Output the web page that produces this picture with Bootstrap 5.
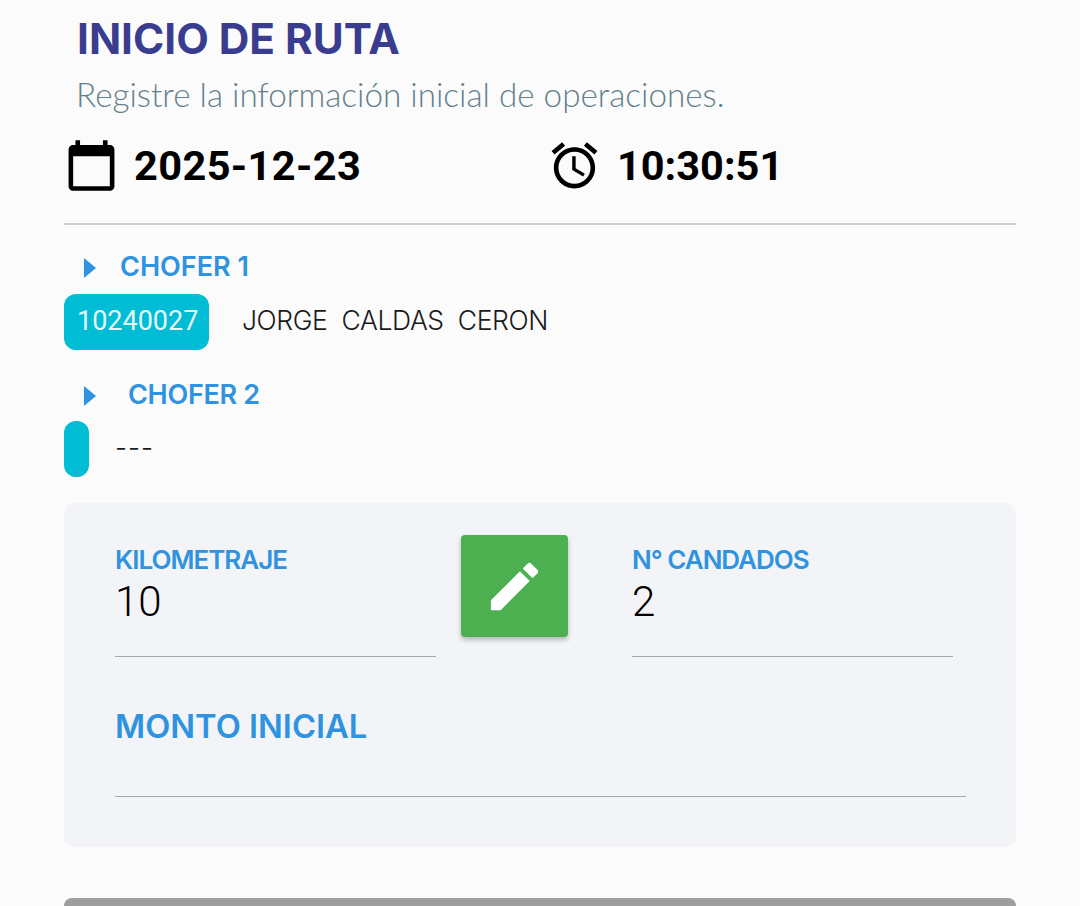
<!DOCTYPE html>
<html lang="es">
<head>
  <meta charset="UTF-8" />
  <meta name="viewport" content="width=device-width, initial-scale=1.0"/>
  <title>Inicio de ruta</title>
  <link href="https://cdn.jsdelivr.net/npm/bootstrap@5.3.3/dist/css/bootstrap.min.css" rel="stylesheet" />
  <style>
    html, body { height: 100%; overflow: hidden; }
    body { background: #fbfbfc; font-family: "Inter", "Liberation Sans", sans-serif; color: #111; }
    .page-wrap { padding: 14px 64px 0; }
    .page-title { margin: 0 0 0 13px; font-family: "Inter", sans-serif; font-weight: 700; font-size: 42.3px; line-height: 50px; color: #3a3d8f; }
    .page-sub { margin: 6px 0 0 12px; font-family: "Lato", sans-serif; font-weight: 300; font-size: 33.25px; line-height: 48px; color: #64808c; }
    .stamp-row { margin-top: 20px; height: 55px; }
    .stamp-cell { width: 483px; }
    .stamp-text { font-family: "Roboto", sans-serif; font-weight: 700; font-size: 41.5px; color: #000; margin-left: 15px; line-height: 55px; }
    .stamp-date { letter-spacing: .4px; }
    .rule { border-top: 2px solid #cfcfcf; margin-top: 30px; }
    .driver-head { color: #2f93e0; font-weight: 600; font-size: 27px; line-height: 36px; margin-top: 24px; }
    .driver-head.is-second { margin-top: 27px; }
    .driver-arrow { margin: 2px 0 0 20px; }
    .driver-title-2 { margin-left: 32px; letter-spacing: -.3px; }
    .driver-row { margin-top: 9px; }
    .driver-row.is-second { margin-top: 8px; }
    .driver-chip { background: #00bcd4; color: #e4f8fb; border-radius: 12px; height: 56px; width: 145px; padding: 0 0 2px 13px; font-family: "Roboto", sans-serif; font-size: 27px; font-weight: 400; }
    .driver-chip.is-empty { padding: 0; width: 25px; }
    .driver-name { font-size: 26.5px; font-weight: 300; letter-spacing: -.4px; color: #1a1a1a; white-space: pre; margin: 0 0 2px 33px; }
    .driver-name.is-blank { margin-left: 26px; letter-spacing: 1px; }
    .data-panel { background: #f3f4f8; border-radius: 12px; margin-top: 26px; height: 344px; padding: 32px 50px 0 51px; }
    .field-col { width: 321px; }
    .field-label { color: #2f93e0; font-weight: 600; font-size: 26px; line-height: 30px; margin-top: 10px; letter-spacing: -1px; }
    .field-value { font-family: "Roboto", sans-serif; font-size: 42px; line-height: 54px; font-weight: 300; color: #000; }
    .field-line { border-top: 1px solid #a6a8ac; margin-top: 27px; }
    .btn-edit { width: 107px; height: 102px; background: #4caf50; border: 0; border-radius: 4px; margin: 0 64px 0 25px; box-shadow: 0 3px 5px rgba(0,0,0,.25); padding: 0; }
    .monto-label { color: #2f93e0; font-weight: 600; font-size: 32.7px; line-height: 40px; margin-top: 49px; }
    .monto-line { border-top: 1px solid #a6a8ac; margin-top: 50px; }
    .btn-submit { display: block; width: 100%; height: 8px; background: #9e9e9e; border: 0; border-radius: 12px 12px 0 0; margin-top: 51px; padding: 0; }
  </style>
</head>
<body>
  <div class="page-wrap">
    <h1 class="page-title">INICIO DE RUTA</h1>
    <p class="page-sub mb-0">Registre la información inicial de operaciones.</p>

    <!-- fecha y hora -->
    <div class="d-flex stamp-row">
      <div class="d-flex align-items-center stamp-cell">
        <svg width="55" height="55" viewBox="0 0 24 24" fill="#000"><path d="M20 3h-1V1h-2v2H7V1H5v2H4c-1.1 0-2 .9-2 2v16c0 1.1.9 2 2 2h16c1.1 0 2-.9 2-2V5c0-1.1-.9-2-2-2zm0 18H4V8h16v13z"/></svg>
        <span class="stamp-text stamp-date">2025-12-23</span>
      </div>
      <div class="d-flex align-items-center">
        <svg width="55" height="55" viewBox="0 0 24 24" fill="#000"><path d="M22 5.72l-4.6-3.86-1.29 1.53 4.6 3.86L22 5.72zM7.88 3.39L6.6 1.86 2 5.71l1.29 1.53 4.59-3.85zM12.5 8H11v6l4.75 2.85.75-1.23-4-2.37V8zM12 4c-4.97 0-9 4.03-9 9s4.03 9 9 9 9-4.03 9-9-4.03-9-9-9zm0 16c-3.87 0-7-3.13-7-7s3.13-7 7-7 7 3.13 7 7-3.13 7-7 7z"/></svg>
        <span class="stamp-text">10:30:51</span>
      </div>
    </div>
    <div class="rule"></div>

    <!-- choferes -->
    <div class="d-flex align-items-center driver-head">
      <svg class="driver-arrow" width="12" height="20" viewBox="0 0 12 20" fill="#2f93e0"><path d="M0 0l12 10L0 20z"/></svg>
      <span class="ms-4">CHOFER 1</span>
    </div>
    <div class="d-flex align-items-center driver-row">
      <span class="d-flex align-items-center driver-chip">10240027</span>
      <span class="driver-name">JORGE  CALDAS  CERON</span>
    </div>
    <div class="d-flex align-items-center driver-head is-second">
      <svg class="driver-arrow" width="12" height="20" viewBox="0 0 12 20" fill="#2f93e0"><path d="M0 0l12 10L0 20z"/></svg>
      <span class="driver-title-2">CHOFER 2</span>
    </div>
    <div class="d-flex align-items-center driver-row is-second">
      <span class="driver-chip is-empty"></span>
      <span class="driver-name is-blank">---</span>
    </div>

    <!-- datos -->
    <div class="data-panel">
      <div class="d-flex">
        <div class="field-col">
          <div class="field-label">KILOMETRAJE</div>
          <div class="field-value">10</div>
          <div class="field-line"></div>
        </div>
        <button type="button" class="btn-edit d-flex align-items-center justify-content-center">
          <svg width="63" height="63" viewBox="0 0 24 24" fill="#fff"><path d="M3 17.25V21h3.75L17.81 9.94l-3.75-3.75L3 17.25zM20.71 7.04c.39-.39.39-1.02 0-1.41l-2.34-2.34c-.39-.39-1.02-.39-1.41 0l-1.83 1.83 3.75 3.75 1.83-1.83z"/></svg>
        </button>
        <div class="field-col">
          <div class="field-label">N° CANDADOS</div>
          <div class="field-value">2</div>
          <div class="field-line"></div>
        </div>
      </div>
      <div class="monto-label">MONTO INICIAL</div>
      <div class="monto-line"></div>
    </div>

    <button type="button" class="btn-submit"></button>
  </div>
</body>
</html>
